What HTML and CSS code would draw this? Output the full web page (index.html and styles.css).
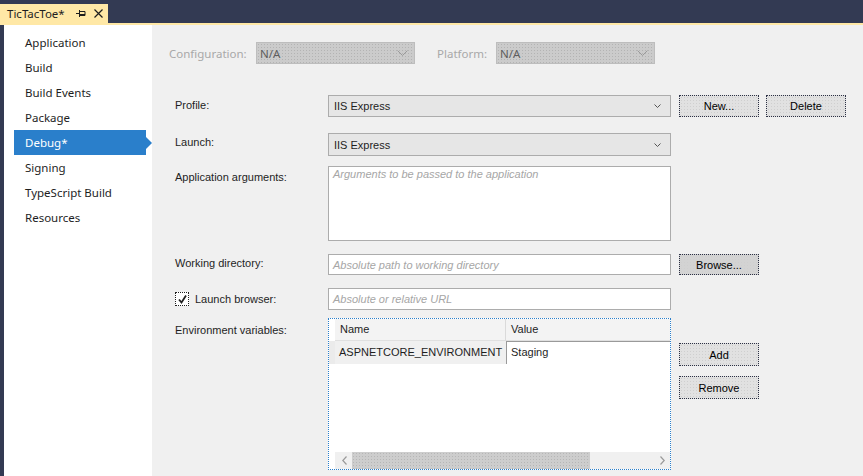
FILE: index.html
```html
<!DOCTYPE html>
<html>
<head>
<meta charset="utf-8">
<link rel="stylesheet" href="styles.css">
</head>
<body>
<div class="window">
  <div class="topbar">
    <div class="doctab">
      <span class="doctab-title">TicTacToe*</span>
      <svg class="pin" width="10" height="9" viewBox="0 0 10 9"><path d="M0 4.5H3M3.5 1V8M3.5 2.5H9V6.5H3.5M3.5 5.5H9" fill="none" stroke="#1e1e1e" stroke-width="1"/></svg>
      <svg class="close" width="9" height="9" viewBox="0 0 9 9"><path d="M0.5 0.5L8.5 8.5M8.5 0.5L0.5 8.5" stroke="#1e1e1e" stroke-width="1.2"/></svg>
    </div>
  </div>
  <div class="tabline"></div>
  <div class="main">
    <div class="leftstrip"></div>
    <nav class="sidebar">
      <div class="nav-item">Application</div>
      <div class="nav-item">Build</div>
      <div class="nav-item">Build Events</div>
      <div class="nav-item">Package</div>
      <div class="nav-item active">Debug*</div>
      <div class="nav-item">Signing</div>
      <div class="nav-item">TypeScript Build</div>
      <div class="nav-item">Resources</div>
    </nav>
    <div class="content">
      <div class="config-row">
        <span class="cfg-label">Configuration:</span>
        <div class="select disabled"><span>N/A</span><svg class="chev-big" width="11" height="6" viewBox="0 0 11 6"><path d="M0.5 0.5L5.5 5.5L10.5 0.5" fill="none" stroke="#9a9a9a"/></svg></div>
        <span class="cfg-label platform">Platform:</span>
        <div class="select disabled"><span>N/A</span><svg class="chev-big" width="11" height="6" viewBox="0 0 11 6"><path d="M0.5 0.5L5.5 5.5L10.5 0.5" fill="none" stroke="#9a9a9a"/></svg></div>
      </div>

      <div class="row row-profile">
        <span class="label">Profile:</span>
        <div class="select"><span>IIS Express</span><svg class="chev" width="7" height="4" viewBox="0 0 7 4"><path d="M0.5 0.5L3.5 3.5L6.5 0.5" fill="none" stroke="#555"/></svg></div>
        <div class="buttons">
          <div class="btn">New...</div>
          <div class="btn">Delete</div>
        </div>
      </div>

      <div class="row row-launch">
        <span class="label">Launch:</span>
        <div class="select"><span>IIS Express</span><svg class="chev" width="7" height="4" viewBox="0 0 7 4"><path d="M0.5 0.5L3.5 3.5L6.5 0.5" fill="none" stroke="#555"/></svg></div>
      </div>

      <div class="row row-args">
        <span class="label">Application arguments:</span>
        <div class="textbox multi"><span class="placeholder">Arguments to be passed to the application</span></div>
      </div>

      <div class="row row-workdir">
        <span class="label">Working directory:</span>
        <div class="textbox"><span class="placeholder">Absolute path to working directory</span></div>
        <div class="buttons">
          <div class="btn btn-hover">Browse...</div>
        </div>
      </div>

      <div class="row row-browser">
        <span class="label check-label">
          <span class="checkbox"><svg width="11" height="11" viewBox="0 0 11 11"><path d="M2 5.5L4.5 8.5L9 1.5" fill="none" stroke="#1e1e1e" stroke-width="1.8"/></svg></span>
          Launch browser:
        </span>
        <div class="textbox"><span class="placeholder">Absolute or relative URL</span></div>
      </div>

      <div class="row row-env">
        <span class="label">Environment variables:</span>
        <div class="envgrid">
          <div class="grid-head">
            <div class="corner"></div>
            <div class="hcell name-col">Name</div>
            <div class="hcell value-col">Value</div>
          </div>
          <div class="grid-row">
            <div class="rowhead"></div>
            <div class="cell name-col">ASPNETCORE_ENVIRONMENT</div>
            <div class="cell value-col edit">Staging</div>
          </div>
          <div class="grid-fill"></div>
          <div class="hscroll">
            <svg class="arrow" width="5" height="9" viewBox="0 0 5 9"><path d="M4.5 0.5L0.8 4.5L4.5 8.5" fill="none" stroke="#9a9a9a" stroke-width="1.2"/></svg>
            <div class="thumb"></div>
            <div class="track"></div>
            <svg class="arrow" width="5" height="9" viewBox="0 0 5 9"><path d="M0.5 0.5L4.2 4.5L0.5 8.5" fill="none" stroke="#9a9a9a" stroke-width="1.2"/></svg>
          </div>
        </div>
        <div class="buttons stack">
          <div class="btn">Add</div>
          <div class="btn">Remove</div>
        </div>
      </div>
    </div>
  </div>
</div>
</body>
</html>
```

FILE: styles.css
```css
* { box-sizing: border-box; }
html, body { margin: 0; padding: 0; }
body {
  width: 863px;
  height: 476px;
  overflow: hidden;
  background: #f0f0f0;
  font-family: "Liberation Sans", Arial, sans-serif;
  font-size: 11px;
  color: #1e1e1e;
}
.window { width: 863px; height: 476px; display: flex; flex-direction: column; }

.topbar {
  height: 23px;
  background: #333a53;
  display: flex;
  align-items: flex-end;
}
.doctab {
  height: 19px;
  width: 108px;
  background: #ffe8a6;
  display: flex;
  align-items: center;
  padding-left: 7px;
  font-family: "Noto Sans", "Open Sans", sans-serif;
  font-size: 11.5px;
  color: #1e1e1e;
}
.doctab-title { width: 69px; }
.pin { margin-right: 8px; }
.tabline { height: 2px; background: #ffe8a6; }

.main { flex: 1; display: flex; min-height: 0; }
.leftstrip { width: 4px; background: #333a53; }
.sidebar {
  width: 148px;
  background: #ffffff;
  padding-top: 5px;
  font-family: "Noto Sans", "Open Sans", sans-serif;
  font-size: 11.5px;
  color: #1e1e1e;
}
.nav-item {
  height: 25px;
  line-height: 25px;
  margin-left: 10px;
  width: 132px;
  padding-left: 11px;
  position: relative;
}
.nav-item.active { background: #2a7fcb; color: #ffffff; }
.nav-item.active::after {
  content: "";
  position: absolute;
  right: -6px;
  top: 6.5px;
  border-top: 6px solid transparent;
  border-bottom: 6px solid transparent;
  border-left: 6px solid #2a7fcb;
}

.content { flex: 1; padding-left: 17px; padding-top: 17px; }

.config-row { display: flex; align-items: center; height: 22px; }
.cfg-label { width: 87px; color: #a8a8a8; font-family: "Noto Sans", sans-serif; font-size: 11.5px; }
.cfg-label.platform { width: 59px; margin-left: 22px; }

.select {
  width: 159px;
  height: 22px;
  border: 1px solid #acacac;
  background: #e6e6e6;
  display: flex;
  align-items: center;
  justify-content: space-between;
  padding: 0 5px 0 5px;
}
.select.disabled {
  background-color: #cbcbcb;
  background-image: radial-gradient(#b3b3b3 0.6px, transparent 0.8px);
  background-size: 3px 3px;
  border-color: #bdbdbd;
  color: #5e5e5e;
  padding-left: 3px;
  padding-right: 6px;
  font-family: "Noto Sans", sans-serif;
  font-size: 11.5px;
}
.chev { margin-right: 4px; }

.row {
  display: grid;
  grid-template-columns: 153px 343px auto;
  align-items: start;
  padding-left: 6px;
}
.row .select { width: 343px; }
.row-profile { margin-top: 31px; }
.row-launch { margin-top: 16px; }
.row-args { margin-top: 10px; }
.row-workdir { margin-top: 13px; }
.row-browser { margin-top: 13px; }
.row-env { margin-top: 8px; }
.row-launch .select { height: 23px; }

.label { line-height: 20px; color: #1e1e1e; }
.row-launch .label, .row-workdir .label { line-height: 18px; }
.row-args .label { line-height: 22px; }
.row-env .label { line-height: 24px; }

.textbox {
  height: 22px;
  border: 1px solid #acacac;
  background: #ffffff;
  padding: 0 4px;
  display: flex;
  align-items: center;
}
.row-workdir .textbox { height: 21px; }
.textbox.multi { height: 75px; align-items: flex-start; padding-top: 1px; }
.placeholder { color: #a6a6a6; font-style: italic; }

.buttons { display: flex; gap: 7px; margin-left: 8px; }
.buttons.stack { flex-direction: column; gap: 10px; margin-top: 25px; }
.btn {
  width: 80px;
  height: 22px;
  border: 1px dotted #2c3145;
  background-color: #e1e1e1;
  background-image: radial-gradient(#cfcfcf 0.6px, transparent 0.8px);
  background-size: 3px 3px;
  display: flex;
  align-items: center;
  justify-content: center;
  color: #000;
}
.row-workdir .btn { height: 21px; }
.btn-hover { background-color: #d3d3d3; }
.buttons.stack .btn { height: 23px; }

.check-label { display: flex; align-items: center; gap: 6px; height: 22px; }
.checkbox {
  width: 14px;
  height: 14px;
  border: 1px dotted #1e1e1e;
  background: #ffffff;
  display: flex;
  align-items: center;
  justify-content: center;
}

.envgrid {
  width: 343px;
  height: 152px;
  border: 1px dotted #2a7fcb;
  background: #ffffff;
  display: flex;
  flex-direction: column;
}
.grid-head { display: flex; height: 22px; }
.corner { width: 6px; background: #ffffff; }
.hcell {
  background: #f3f3f3;
  border-bottom: 1px solid #e0e0e0;
  padding-left: 5px;
  line-height: 21px;
}
.name-col { width: 171px; }
.hcell.name-col { border-right: 1px solid #dadada; }
.value-col { flex: 1; }
.grid-row { display: flex; height: 23px; }
.rowhead { width: 6px; background: #ebebeb; }
.cell { line-height: 22px; padding-left: 4px; background: #f0f0f0; }
.cell.edit {
  background: #ffffff;
  border-top: 1px solid #9a9a9a;
  border-left: 1px solid #9a9a9a;
  padding-left: 4px;
  line-height: 21px;
}
.grid-fill { flex: 1; }
.hscroll {
  height: 17px;
  margin-left: 6px;
  background: #f0f0f0;
  display: flex;
  align-items: center;
}
.hscroll .arrow { margin: 0 6px; }
.hscroll .arrow:first-child { margin-left: 7px; margin-right: 5px; }
.thumb {
  width: 238px;
  height: 17px;
  background-color: #cdcdcd;
  background-image: radial-gradient(#b6b6b6 0.6px, transparent 0.8px);
  background-size: 3px 3px;
}
.track { flex: 1; }
.hscroll .arrow:last-child { margin-right: 5px; }
```
